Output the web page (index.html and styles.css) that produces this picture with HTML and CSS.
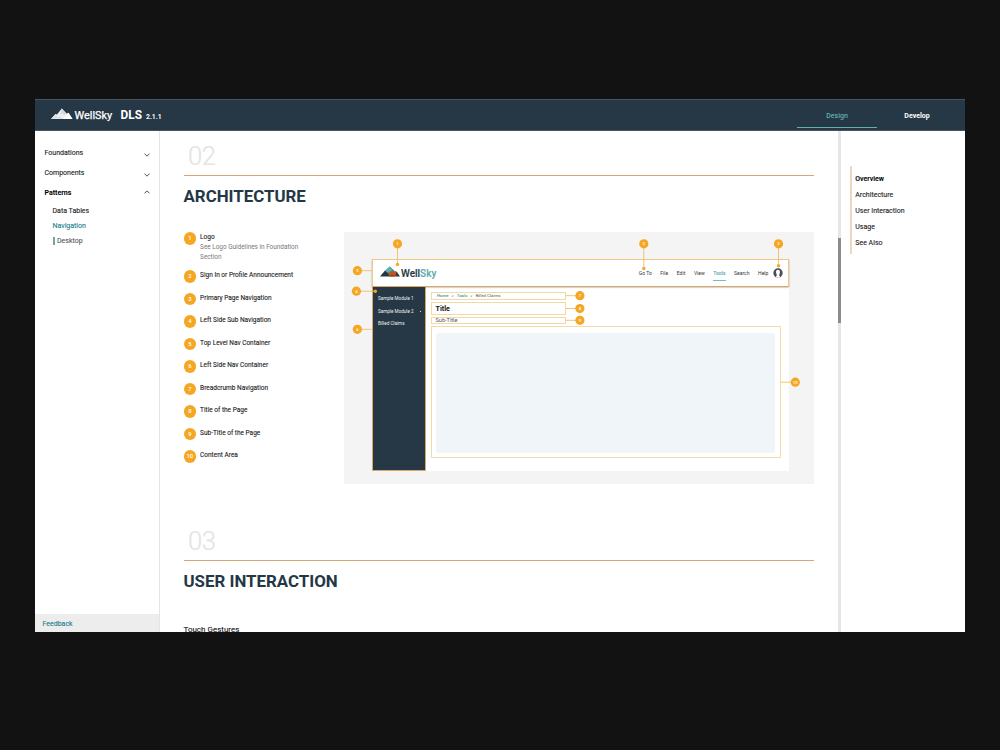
FILE: index.html
```html
<!DOCTYPE html>
<html lang="en">
<head>
<meta charset="utf-8">
<title>WellSky DLS</title>
<link rel="stylesheet" href="styles.css">
</head>
<body>
<div class="window">
  <header class="topbar">
    <svg class="brand-mark" viewBox="0 0 22 12" width="22" height="12">
      <path fill="#eef1f3" d="M0 11 4.5 6 6 6.4 10.8.5 15.5 5.5 17.5 4.8 21.5 11z"/>
      <path fill="#d3d9dd" d="M10.8.5 15.5 5.5 13.2 7.2 11.5 5.6 9.3 7z"/>
      <path fill="#dfe3e6" d="M0 11 4.5 6 7 9 9.5 8 12 11z"/>
      <path fill="#fff" d="M12 11 17.5 4.8 21.5 11z"/>
    </svg>
    <span class="brand">WellSky</span>
    <span class="product">DLS</span>
    <span class="version">2.1.1</span>
    <nav class="tabs">
      <a class="tab tab-active">Design</a>
      <a class="tab">Develop</a>
    </nav>
  </header>
  <div class="body">
    <aside class="sidebar">
      <nav class="menu">
        <a class="menu-item">Foundations<svg class="chev" viewBox="0 0 6 4" width="6" height="4"><path d="M.5.6 3 3.2 5.5.6"/></svg></a>
        <a class="menu-item">Components<svg class="chev" viewBox="0 0 6 4" width="6" height="4"><path d="M.5.6 3 3.2 5.5.6"/></svg></a>
        <a class="menu-item menu-open">Patterns<svg class="chev" viewBox="0 0 6 4" width="6" height="4"><path d="M.5 3.4 3 .8 5.5 3.4"/></svg></a>
        <a class="sub-item">Data Tables</a>
        <a class="sub-item sub-active">Navigation</a>
        <a class="sub-item sub-leaf">Desktop</a>
      </nav>
      <a class="feedback">Feedback</a>
    </aside>
    <main class="content">
      <section class="section">
        <div class="number">02</div>
        <h2 class="heading">Architecture</h2>
        <div class="split">
          <ol class="legend">
            <li class="entry entry-tall"><span class="badge">1</span><span>Logo<small class="note">See Logo Guidelines in Foundation Section</small></span></li>
            <li class="entry"><span class="badge">2</span><span>Sign In or Profile Announcement</span></li>
            <li class="entry"><span class="badge">3</span><span>Primary Page Navigation</span></li>
            <li class="entry"><span class="badge">4</span><span>Left Side Sub Navigation</span></li>
            <li class="entry"><span class="badge">5</span><span>Top Level Nav Container</span></li>
            <li class="entry"><span class="badge">6</span><span>Left Side Nav Container</span></li>
            <li class="entry"><span class="badge">7</span><span>Breadcrumb Navigation</span></li>
            <li class="entry"><span class="badge">8</span><span>Title of the Page</span></li>
            <li class="entry"><span class="badge">9</span><span>Sub-Title of the Page</span></li>
            <li class="entry"><span class="badge">10</span><span>Content Area</span></li>
          </ol>
          <div class="figure">
            <div class="mock">
              <div class="mock-head">
                <svg class="mock-mark" viewBox="0 0 20 11" width="20" height="11">
                  <path fill="#3b8388" d="M4.6 5.2 9.8.4 14.6 5 10 9z"/>
                  <path fill="#64adae" d="M5 4.8 9.8.4 12.4 4.4 10 5.6 8.2 7.4z"/>
                  <path fill="#243746" d="M0 10.5 4.8 4.8 7.4 6.4 11 10.5z"/>
                  <path fill="#c8521b" d="M9.6 10.5 8.4 7.6 11 5.8 15.8 5 17.5 7 15.5 10.5z"/>
                  <path fill="#8f3a1c" d="M9.6 10.5 12 8.4 15.5 10.5z"/>
                  <path fill="#243746" d="M15.4 10.5 16.6 5.6 20 10.5z"/>
                </svg>
                <span class="mock-brand">Well<span class="sky">Sky</span></span>
                <nav class="mock-nav">
                  <span>Go To</span><span>File</span><span>Edit</span><span>View</span><span class="mock-on">Tools</span><span>Search</span><span>Help</span>
                </nav>
                <svg class="avatar" viewBox="0 0 10 10" width="10" height="10">
                  <circle cx="5" cy="5" r="4.7" fill="#4b4f54"/>
                  <path fill="#fff" d="M5 1.8C3.5 1.8 2.9 3 3.1 4.4 3.2 5.5 3.5 6.2 3.7 6.6V7.6L2.8 8.9Q5 10.4 7.2 8.9L6.3 7.6V6.6C6.5 6.2 6.8 5.5 6.9 4.4 7.1 3 6.5 1.8 5 1.8z"/>
                </svg>
              </div>
              <div class="mock-body">
                <div class="mock-side">
                  <span>Sample Module 1</span>
                  <span>Sample Module 2<i class="dot"></i></span>
                  <span>Billed Claims</span>
                </div>
                <div class="mock-main">
                  <div class="box crumbs"><b>Home</b><i>&gt;</i><b>Tools</b><i>&gt;</i><span>Billed Claims</span></div>
                  <div class="box title">Title</div>
                  <div class="box subtitle">Sub-Title</div>
                  <div class="area"><div class="area-fill"></div></div>
                </div>
              </div>
            </div>
            <svg class="callouts" viewBox="344 232 470 253" width="470" height="253">
              <g stroke="#f3bd62" stroke-width=".9" fill="none">
                <path d="M397.5 244V264M643.8 244V268M778.5 244V265M357 270.7H372M357 291.2H375M357 329.3H372M566 295.7H580M566 308.5H580M566 320.3H580M781 382.2H795"/>
              </g>
              <g fill="#f5a623">
                <circle cx="397.5" cy="264.4" r="1.7"/><circle cx="643.8" cy="268.5" r="1.7"/><circle cx="778.5" cy="265.8" r="1.7"/><circle cx="375.3" cy="291.2" r="1.7"/>
                <circle cx="397.5" cy="243.8" r="4.6"/><circle cx="643.8" cy="243.8" r="4.6"/><circle cx="778.5" cy="243.8" r="4.6"/>
                <circle cx="357.4" cy="270.7" r="4.6"/><circle cx="356.4" cy="291.2" r="4.6"/><circle cx="357.4" cy="329.3" r="4.6"/>
                <circle cx="579.9" cy="295.7" r="4.6"/><circle cx="579.9" cy="308.5" r="4.6"/><circle cx="579.9" cy="320.3" r="4.6"/><circle cx="795.3" cy="382.2" r="4.6"/>
              </g>
              <g class="callout-text">
                <text x="397.5" y="245.4">1</text><text x="643.8" y="245.4">3</text><text x="778.5" y="245.4">2</text>
                <text x="357.4" y="272.3">5</text><text x="356.4" y="292.8">4</text><text x="357.4" y="330.9">6</text>
                <text x="579.9" y="297.3">7</text><text x="579.9" y="310.1">8</text><text x="579.9" y="321.9">9</text><text x="795.3" y="383.8">10</text>
              </g>
            </svg>
          </div>
        </div>
      </section>
      <section class="section">
        <div class="number">03</div>
        <h2 class="heading">User Interaction</h2>
        <h3 class="subheading">Touch Gestures</h3>
      </section>
    </main>
    <div class="scroll"><div class="thumb"></div></div>
    <aside class="toc">
      <nav class="toc-list">
        <a class="toc-item toc-active">Overview</a>
        <a class="toc-item">Architecture</a>
        <a class="toc-item">User Interaction</a>
        <a class="toc-item">Usage</a>
        <a class="toc-item">See Also</a>
      </nav>
    </aside>
  </div>
</div>
</body>
</html>
```
FILE: styles.css
```css
* { box-sizing: border-box; }
body {
  margin: 0;
  height: 750px;
  padding: 99px 35px 0 35px;
  background: #121212;
  font-family: Roboto, sans-serif;
  font-size: 7px;
  color: #202224;
  overflow: hidden;
}
.window {
  height: 533px;
  display: flex;
  flex-direction: column;
  background: #fff;
  overflow: hidden;
}

/* Top bar */
.topbar {
  height: 32px;
  flex: none;
  display: flex;
  align-items: center;
  padding-left: 16px;
  background: #263746;
  border-top: 1px solid #465460;
  border-bottom: 1px solid #465460;
  color: #fff;
  white-space: nowrap;
}
.brand-mark { margin: -2px 1.5px 0 0; }
.brand { font-size: 10.9px; width: 46px; -webkit-text-stroke: .25px #fff; }
.product { font-size: 11.9px; font-weight: 700; width: 25.5px; }
.version { font-size: 6.8px; font-weight: 700; padding-top: 4px; }
.tabs { margin-left: auto; display: flex; align-self: stretch; margin-right: 8px; }
.tab {
  width: 80px;
  height: 27.5px;
  line-height: 32px;
  text-align: center;
  font-weight: 700;
}
.tab-active { color: #5fb0b1; font-weight: 500; border-bottom: 1.5px solid #5fb0b1; }

.body { flex: 1; display: flex; min-height: 0; }

/* Left menu */
.sidebar {
  width: 125px;
  display: flex;
  flex-direction: column;
  justify-content: space-between;
  border-right: 1px solid #e4e4e4;
}
.menu { padding: 12px 9px 0 9.5px; display: flex; flex-direction: column; }
.menu-item {
  height: 20px;
  line-height: 21px;
  display: flex;
  justify-content: space-between;
  -webkit-text-stroke: .1px;
}
.menu-open { font-weight: 700; color: #000; -webkit-text-stroke: 0; }
.chev { margin-top: 9.5px; fill: none; stroke: #3c4045; stroke-width: .9; }
.menu-open .chev { margin-top: 7px; }
.sub-item { height: 15px; line-height: 15px; margin-left: 8px; -webkit-text-stroke: .1px; }
.menu-open + .sub-item { margin-top: 1px; }
.sub-active { color: #16808a; }
.sub-leaf {
  height: 8px;
  line-height: 8px;
  margin-top: 3px;
  padding-left: 2.5px;
  border-left: 2px solid #69a9ad;
  color: #55595d;
}
.feedback {
  height: 18px;
  line-height: 20px;
  padding-left: 7.5px;
  background: #ededed;
  color: #16808a;
  -webkit-text-stroke: .1px;
}

/* Article */
.content { width: 678px; padding: 11px 24px 0 23.5px; overflow: hidden; }
.section + .section { margin-top: 42.6px; }
.number { height: 28px; line-height: 28px; padding-left: 4.6px; font-size: 25.6px; letter-spacing: -.6px; font-weight: 300; color: #e4e4e4; -webkit-text-stroke: .2px #e4e4e4; }
.heading {
  margin: 5px 0 0;
  padding-top: 10px;
  border-top: 1px solid #d3a878;
  font-size: 16.86px;
  line-height: 20px;
  font-weight: 700;
  text-transform: uppercase;
  color: #243746;
}
.subheading { margin: 33px 0 0; font-size: 8px; line-height: 11px; font-weight: 400; color: #111; -webkit-text-stroke: .1px; }
.split { display: flex; margin-top: 26px; }

.legend { list-style: none; margin: 0; padding: 0; width: 160.5px; font-size: 6.5px; line-height: 10px; }
.entry { height: 22.5px; display: flex; gap: 4px; }
.entry-tall { height: 38px; }
.entry > span:last-child { width: 106px; -webkit-text-stroke: .1px; }
.note { display: block; font-size: 6.4px; color: #76797c; -webkit-text-stroke: 0; }
.badge {
  flex: none;
  width: 12.6px;
  height: 12.6px;
  border-radius: 50%;
  background: #f5a623;
  color: #fff;
  font-size: 5.8px;
  font-weight: 500;
  line-height: 13px;
  text-align: center;
}

/* Annotated application frame */
.figure { position: relative; flex: none; width: 470px; height: 252.4px; padding: 27px 26px 14px 28px; background: #f4f4f4; }
.mock { height: 212px; width: 416.5px; background: #fff; display: flex; flex-direction: column; }
.mock-head {
  height: 28px;
  flex: none;
  display: flex;
  align-items: center;
  padding: 0 4.3px 0 7px;
  border: 1px solid #efc98a;
  border-bottom-color: #d6a96a;
  box-shadow: 0 .5px 1.5px rgba(90, 60, 20, .55);
  position: relative;
  background: #fff;
  white-space: nowrap;
}
.mock-mark { margin-top: -3px; }
.mock-brand { margin-left: 1px; font-size: 10px; font-weight: 500; color: #243746; -webkit-text-stroke: .15px; }
.sky { color: #64adae; }
.mock-nav { margin-left: auto; display: flex; gap: 8.6px; font-size: 5px; line-height: 14px; color: #333; margin-right: 4.9px; }
.mock-on { color: #4a9fa2; font-weight: 500; box-shadow: 0 1px 0 #79babb; }
.mock-body { flex: 1; display: flex; }
.mock-side {
  width: 53.5px;
  padding: 5.8px 3.5px 0 5px;
  background: #263746;
  border: .7px solid #d6a96a;
  border-top: 0;
  color: #eef1f3;
  font-size: 4.6px;
  line-height: 12.8px;
}
.mock-side span { display: flex; justify-content: space-between; align-items: center; white-space: nowrap; }
.dot { width: 1.5px; height: 1px; background: #dde2e6; }
.mock-main { padding: 4.5px 0 0 5.5px; }
.box { width: 135px; border: 1px solid #f3d9a6; padding-left: 3.5px; white-space: nowrap; }
.crumbs { height: 8px; line-height: 6.6px; font-size: 4.3px; display: flex; padding-left: 5px; color: #555; }
.crumbs b { font-weight: 500; color: #3f979c; }
.crumbs i { font-style: normal; width: 8.3px; text-align: center; }
.title { height: 13px; margin-top: 2.5px; font-size: 7.1px; line-height: 11.6px; font-weight: 700; color: #111; }
.subtitle { height: 7px; margin-top: 2px; font-size: 5.6px; line-height: 5px; color: #555; }
.area { width: 350px; height: 132px; margin-top: 1.8px; border: 1px solid #f1dba9; padding: 6px 5px 6px 4.4px; }
.area-fill { height: 120px; border-radius: 3px; background: #f0f5fa; }
.callouts { position: absolute; left: 0; top: 0; }
.callout-text { fill: #fff; font-size: 4.3px; font-weight: 500; text-anchor: middle; }

/* Scroll track and page outline */
.scroll { width: 3px; background: #e6e6e6; padding-top: 107px; }
.thumb { height: 85px; background: #8c8c8c; }
.toc { flex: 1; padding: 35px 0 0 9px; }
.toc-list {
  height: 88px;
  padding: 4px 0 0 3.3px;
  border-left: 2px solid #ecd7c2;
  display: flex;
  flex-direction: column;
}
.toc-item { height: 16px; line-height: 18px; -webkit-text-stroke: .1px; }
.toc-active { font-weight: 500; color: #000; }
```
